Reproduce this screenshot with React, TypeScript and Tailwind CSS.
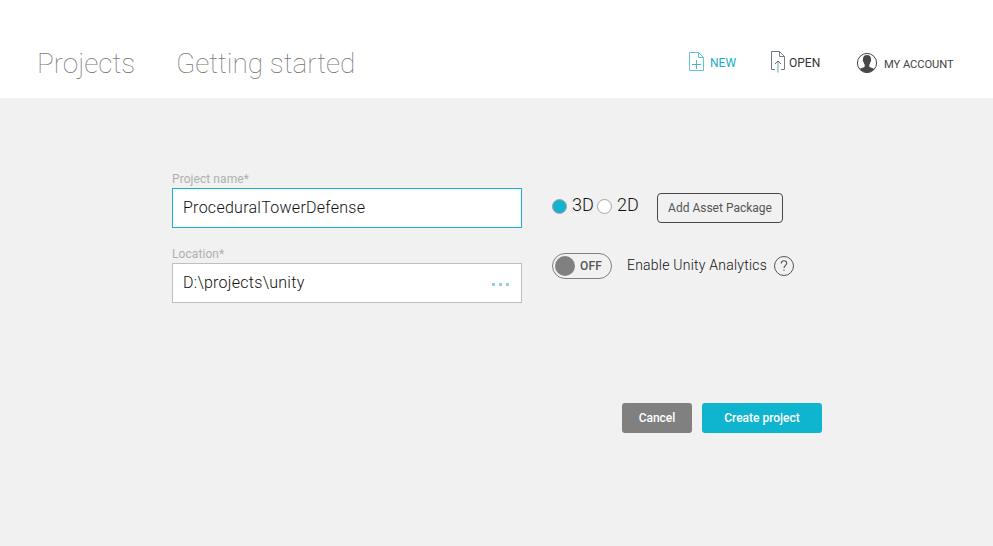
function DocumentIcon({ kind }: { kind: "new" | "open" }) {
  const isNew = kind === "new";
  return (
    <svg width="16" height="23" viewBox="0 0 16 23" fill="none" className="shrink-0">
      {isNew ? (
        <>
          <path d="M10.500 1.500H1.500V19.500H15.500V6.500L10.500 1.500V6.500H15.500" stroke="#5fc4d8" />
          <path d="M8.500 9V18M4 13.500H13" stroke="#4bb5cb" />
        </>
      ) : (
        <>
          <path d="M5 18.500H1.500V0.500H9.500L14.500 5.500V18.500H11M9.500 0.500V5.500H14.500" stroke="#777b82" />
          <path d="M8 21.500V10.500" stroke="#5ba7bf" />
          <path d="M5 13L8 10L11 13" stroke="#666" />
        </>
      )}
    </svg>
  );
}

function AccountIcon() {
  return (
    <svg width="22" height="22" viewBox="0 0 22 22" className="shrink-0">
      <circle cx="11" cy="11" r="9.6" fill="#fff" stroke="#484848" />
      <path
        d="M7 7C7 4.200 8.500 3 11 3s4 1.200 4 4c0 .5.300.800.100 1.800-.2.800-.6 1-.8 1.600-.2 1-.5 1.700-1 2.300v1.800c.6 1 3.400 1.300 5 2.600A9.600 9.600 0 0 1 11 20.500a9.600 9.600 0 0 1-7.300-3.400c1.600-1.300 4.400-1.600 5-2.600v-1.800c-.5-.6-.8-1.300-1-2.300-.2-.6-.6-.8-.8-1.600-.2-1 .1-1.300.1-1.800Z"
        fill="#484848"
      />
    </svg>
  );
}

export default function App() {
  return (
    <div className="flex h-[546px] w-[993px] flex-col overflow-hidden whitespace-nowrap bg-[#f1f1f1] font-['Roboto',sans-serif] text-[#333]">
      <header className="flex h-[98px] shrink-0 bg-white">
        <nav className="flex pl-[37px] pt-[44px] text-[28px] font-thin leading-[40px] tracking-[-0.05px] text-[#777]">
          <a className="w-[139px]">Projects</a>
          <a className="w-[180px]">Getting started</a>
        </nav>
        <div className="flex grow items-start pl-[332px] pt-[51px] text-[12px] leading-6">
          <a className="flex w-[82px] gap-[6px] text-[#14aec9]">
            <DocumentIcon kind="new" />
            <span>NEW</span>
          </a>
          <a className="flex w-[86px] gap-[3px]">
            <DocumentIcon kind="open" />
            <span>OPEN</span>
          </a>
          <a className="flex gap-[6px] pt-px">
            <AccountIcon />
            <span className="pt-px text-[11.2px] tracking-[-0.07px] text-[#444]">MY ACCOUNT</span>
          </a>
        </div>
      </header>

      <main className="flex grow flex-col pl-[172px] pt-[73px]">
        <div className="flex gap-[30px]">
          <div className="flex w-[350px] flex-col">
            <label className="h-[17px] text-[12px] leading-[17px] tracking-[0.07px] text-[#b0b0b0]">Project name*</label>
            <div className="flex h-10 items-center border border-[#13b2cd] bg-white px-[10px] text-[16px] font-light tracking-[0.27px] text-[#111]">
              ProceduralTowerDefense
            </div>
            <label className="mt-[18px] h-[17px] text-[12px] leading-[17px] tracking-[0.07px] text-[#b0b0b0]">Location*</label>
            <div className="flex h-10 items-center justify-between border border-[#bfbfbf] bg-white px-[10px] text-[16px] font-light tracking-[0.27px] text-[#111]">
              <span>D:\projects\unity</span>
              <span className="mr-[2px] mt-[3px] flex gap-1">
                <i className="size-[3px] rounded-[1px] bg-[#7ecfdf]" />
                <i className="size-[3px] rounded-[1px] bg-[#7ecfdf]" />
                <i className="size-[3px] rounded-[1px] bg-[#7ecfdf]" />
              </span>
            </div>
          </div>

          <div className="flex flex-col pt-[22px]">
            <div className="flex h-[30px]">
              <span className="mt-[6px] size-[15px] rounded-full border border-[#a5a5a5] bg-[#13b2cd]" />
              <span className="ml-[5px] w-[25px] text-[18px] font-light leading-6 text-[#111]">3D</span>
              <span className="mt-[6px] size-[15px] rounded-full border border-[#a5a5a5] bg-white" />
              <span className="ml-[5px] w-10 text-[18px] font-light leading-6 text-[#111]">2D</span>
              <button className="h-[30px] w-[126px] rounded-[4px] border border-[#484848] text-[12px] text-[#555]">
                Add Asset Package
              </button>
            </div>
            <div className="mt-[30px] flex h-[26px] items-center">
              <div className="flex h-[26px] w-[60px] items-center rounded-full border border-[#808080] pl-[2px]">
                <i className="size-5 rounded-full bg-[#808080]" />
                <span className="ml-[5px] text-[12px] font-medium tracking-[0.2px] text-[#555]">OFF</span>
              </div>
              <span className="mb-[2px] ml-[15px] w-[146px] text-[14px] font-light tracking-[0.23px] text-[#111]">Enable Unity Analytics</span>
              <svg width="22" height="22" viewBox="0 0 22 22" fill="none" stroke="#555">
                <circle cx="11" cy="11" r="9.5" />
                <path d="M8.300 8.500C8.300 6.700 9.400 5.800 11 5.800s2.700.9 2.700 2.400c0 2-2.700 2.300-2.700 4.800M11 14.500v1.300" strokeWidth="1.100" />
              </svg>
            </div>
          </div>
        </div>

        <div className="mt-[100px] flex gap-[10px] pl-[450px] text-[12px] font-medium text-white">
          <button className="h-[30px] w-[70px] rounded-[3px] bg-[#808080]">Cancel</button>
          <button className="h-[30px] w-[120px] rounded-[3px] bg-[#0fb4cf]">Create project</button>
        </div>
      </main>
    </div>
  );
}
